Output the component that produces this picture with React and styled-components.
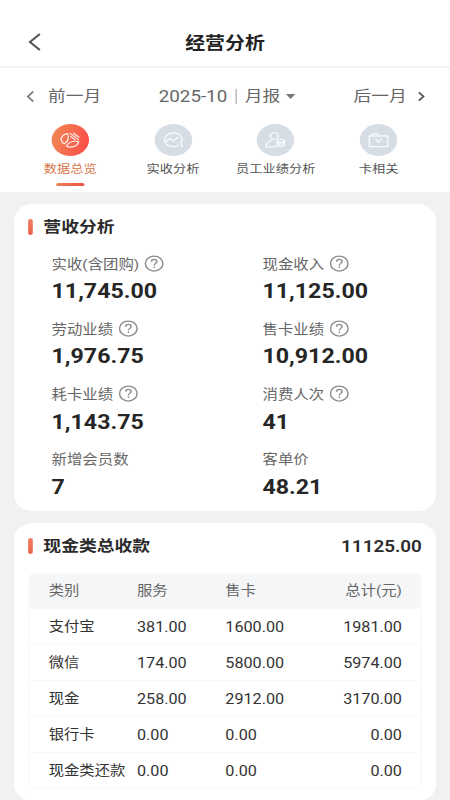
import React, { useState } from "react";
import styled, { createGlobalStyle } from "styled-components";

const months = { prev: "前一月", next: "后一月", current: "2025-10", type: "月报" };

const tabs = [
	{ id: "overview", label: "数据总览", Icon: PieIcon },
	{ id: "income", label: "实收分析", Icon: TrendIcon },
	{ id: "staff", label: "员工业绩分析", Icon: StaffIcon },
	{ id: "card", label: "卡相关", Icon: WalletIcon },
];

const stats = [
	{ label: "实收(含团购)", value: "11,745.00", help: true },
	{ label: "现金收入", value: "11,125.00", help: true },
	{ label: "劳动业绩", value: "1,976.75", help: true },
	{ label: "售卡业绩", value: "10,912.00", help: true },
	{ label: "耗卡业绩", value: "1,143.75", help: true },
	{ label: "消费人次", value: "41", help: true },
	{ label: "新增会员数", value: "7" },
	{ label: "客单价", value: "48.21" },
];

const rows = [
	["支付宝", "381.00", "1600.00", "1981.00"],
	["微信", "174.00", "5800.00", "5974.00"],
	["现金", "258.00", "2912.00", "3170.00"],
	["银行卡", "0.00", "0.00", "0.00"],
	["现金类还款", "0.00", "0.00", "0.00"],
];

export default function App() {
	const [active, setActive] = useState("overview");

	return (
		<>
			<GlobalStyle />
			<Page>
				<Header>
					<BackIcon />
					<Title>经营分析</Title>
				</Header>

				<TopPanel>
					<MonthBar>
						<MonthButton>
							<SmallChevron />
							<span>{months.prev}</span>
						</MonthButton>
						<MonthPicker>
							<MonthValue>{months.current}</MonthValue>
							<Divider />
							<span>{months.type}</span>
							<Caret />
						</MonthPicker>
						<MonthButton $next>
							<span>{months.next}</span>
							<SmallChevron right />
						</MonthButton>
					</MonthBar>

					<Tabs>
						{tabs.map(({ id, label, Icon }) => (
							<Tab key={id} onClick={() => setActive(id)}>
								<TabCircle $active={id === active}>
									<Icon />
								</TabCircle>
								<TabLabel $active={id === active}>{label}</TabLabel>
								{id === active ? <TabLine /> : null}
							</Tab>
						))}
					</Tabs>
				</TopPanel>

				<Card>
					<CardHead>
						<Bar />
						<CardTitle>营收分析</CardTitle>
					</CardHead>
					<Stats>
						{stats.map((s) => (
							<Stat key={s.label}>
								<StatLabel>
									{s.label}
									{s.help ? <HelpIcon /> : null}
								</StatLabel>
								<StatValue>{s.value}</StatValue>
							</Stat>
						))}
					</Stats>
				</Card>

				<Card>
					<CardHead>
						<Bar />
						<CardTitle>现金类总收款</CardTitle>
						<Total>11125.00</Total>
					</CardHead>
					<Table>
						<TableHead>
							<span>类别</span>
							<span>服务</span>
							<span>售卡</span>
							<span>总计(元)</span>
						</TableHead>
						{rows.map(([name, ...nums]) => (
							<TableRow key={name}>
								<span>{name}</span>
								{nums.map((n, i) => (
									<Num key={i}>{n}</Num>
								))}
							</TableRow>
						))}
					</Table>
				</Card>
			</Page>
		</>
	);
}

function BackIcon() {
	return (
		<svg width="11" height="18" viewBox="0 0 11 18" fill="none" stroke="#555" strokeWidth="1.8">
			<path d="M10 1 L1.5 9 L10 17" />
		</svg>
	);
}

function SmallChevron({ right }) {
	return (
		<svg width="7" height="11" viewBox="0 0 7 11" fill="none" stroke={right ? "#555" : "#777"} strokeWidth="1.6">
			<path d={right ? "M1.4 1.4 L5.4 5.5 L1.4 9.6" : "M6.4 .5 L1.8 5.5 L6.4 10.5"} />
		</svg>
	);
}

function HelpIcon() {
	return (
		<svg width="17" height="17" viewBox="0 0 17 17" fill="none" stroke="#8c8c8c" strokeWidth="1.25">
			<circle cx="8.5" cy="8.5" r="7.5" />
			<path d="M6.2 6.8 C6.2 3.4 10.9 3.6 10.9 6.6 C10.9 8.4 8.6 8.4 8.6 10.4" />
			<path d="M8.6 11.6 V13" />
		</svg>
	);
}

function PieIcon() {
	return (
		<svg width="18" height="18" viewBox="0 0 18 18" fill="none" stroke="#ffe9e2" strokeWidth="1.15" strokeLinejoin="round" strokeLinecap="round">
			<path d="M6.6 2.6 C3 3.2 .9 6 1.3 8.8 C1.6 11 2.8 12.3 4 12.8 C6.6 10.8 8.4 8 6.6 2.6 Z" />
			<path d="M5.6 15 C9 17.2 15 16 16.2 10.6 C12 9.6 8 11 5.6 15 Z" />
			<path d="M8.8 2.4 L15.8 8.6 M11.8 2.2 L16.4 6.2 M9.2 5.4 L13 8.8" />
		</svg>
	);
}

function TrendIcon() {
	return (
		<svg width="18" height="18" viewBox="0 0 18 18" fill="none" stroke="#f4f9fd" strokeWidth="1.3" strokeLinejoin="round" strokeLinecap="round">
			<path d="M13 14.6 C9.8 16.5 4.2 15.6 2.2 12 C-.2 6.5 3.4 2 9 2 C14.6 2 18 7 15.2 12.2 L16.4 15.4" />
			<path d="M2.4 10.4 L6 7.4 L8.8 9.8 L13 6.2" />
		</svg>
	);
}

function StaffIcon() {
	return (
		<svg width="18" height="18" viewBox="0 0 18 18" fill="none" stroke="#f4f9fd" strokeWidth="1.3" strokeLinejoin="round" strokeLinecap="round">
			<circle cx="8" cy="5" r="3.4" />
			<path d="M6 8.2 C6 10.4 1 10 1 15.8 H10" />
			<ellipse cx="13.6" cy="9.8" rx="3" ry="1.5" />
			<path d="M10.6 10 V14 C11 15.9 16.2 15.9 16.6 14 V10 M10.8 12.2 C12 13.3 15.2 13.3 16.4 12.2" />
		</svg>
	);
}

function WalletIcon() {
	return (
		<svg width="18" height="18" viewBox="0 0 18 18" fill="none" stroke="#f4f9fd" strokeWidth="1.3" strokeLinejoin="round" strokeLinecap="round">
			<path d="M1.2 5 H16.8 V15.6 H1.2 Z" />
			<path d="M1.6 4.8 L5.6 2.4 L8 2.8 L9.2 4.8" />
			<path d="M6.8 8.4 L9 11.2 L11.2 8.4" strokeWidth="1.5" />
		</svg>
	);
}

const GlobalStyle = createGlobalStyle`
	* {
		box-sizing: border-box;
	}
	body {
		margin: 0;
		background: #f1f1f1;
		overflow: hidden;
	}
`;

// 384pt wide design, widened to the 450px viewport
const Page = styled.div`
	width: 384px;
	height: 800px;
	overflow: hidden;
	transform: scaleX(1.171875);
	transform-origin: 0 0;
	background: #f1f1f1;
	color: #2b2b2b;
	font-family: Roboto, "Noto Sans CJK SC", sans-serif;
	font-size: 13px;
	& svg {
		flex: none;
		display: block;
	}
`;

const Header = styled.header`
	display: grid;
	grid-template-columns: 1fr auto 1fr;
	align-items: center;
	height: 68px;
	padding: 18px 24px 0;
	background: #fff;
	border-bottom: 2px solid #f4f4f4;
`;

const Title = styled.h1`
	margin: 0;
	padding-top: 1px;
	font-size: 17px;
	line-height: 24px;
	font-weight: 600;
	color: #222;
`;

const TopPanel = styled.section`
	height: 124px;
	background: #fff;
`;

const MonthBar = styled.div`
	display: grid;
	grid-template-columns: 113.5px 1fr auto;
	align-items: center;
	height: 56px;
	padding: 0 21px 0 22px;
	font-size: 15.1px;
	line-height: 20px;
	color: #666;
`;

const MonthButton = styled.div`
	display: flex;
	align-items: center;
	gap: ${(p) => (p.$next ? "9px" : "12px")};
`;

const MonthPicker = styled.div`
	display: flex;
	align-items: center;
`;

const MonthValue = styled.b`
	padding-top: 1px;
	font-size: 16px;
	font-weight: 400;
`;

const Divider = styled.i`
	width: 1px;
	height: 15px;
	margin: 0 7px;
	background: #aaa;
`;

const Caret = styled.i`
	margin-left: 5px;
	border: 4.5px solid transparent;
	border-top: 5px solid #777;
	border-bottom: 0;
`;

const Tabs = styled.nav`
	display: grid;
	grid-template-columns: repeat(4, 1fr);
	padding: 0 17px 0 16px;
`;

const Tab = styled.div`
	display: flex;
	flex-direction: column;
	align-items: center;
`;

const TabCircle = styled.div`
	display: flex;
	align-items: center;
	justify-content: center;
	width: 32px;
	height: 32px;
	border-radius: 50%;
	background: ${(p) => (p.$active ? "linear-gradient(100deg, #f08a55, #fb4a47)" : "#d6dde5")};
`;

const TabLabel = styled.span`
	margin-top: 5px;
	font-size: 11.3px;
	line-height: 17px;
	white-space: nowrap;
	color: ${(p) => (p.$active ? "#d5764a" : "#555")};
`;

const TabLine = styled.i`
	width: 24px;
	height: 3px;
	margin-top: 5px;
	border-radius: 2px;
	background: linear-gradient(90deg, #ea8258, #ee5148);
`;

const Card = styled.section`
	margin: 12px 12px 0;
	padding: 11px 12px 12px;
	border-radius: 16px;
	background: #fff;
`;

const CardHead = styled.div`
	display: flex;
	align-items: center;
	height: 24px;
`;

const Bar = styled.i`
	width: 4px;
	height: 16px;
	margin-right: 9px;
	border-radius: 2px;
	background: linear-gradient(#ee8062, #f0604f);
`;

const CardTitle = styled.h2`
	margin: 0;
	font-size: 15.2px;
	line-height: 24px;
	font-weight: 600;
	color: #2b2b2b;
`;

const Total = styled.strong`
	margin-left: auto;
	padding-top: 1px;
	font-size: 16.1px;
	font-weight: 600;
`;

const Stats = styled.div`
	display: grid;
	grid-template-columns: 180px 1fr;
	grid-auto-rows: 65.3px;
	height: 260px;
	padding: 15px 0 0 20px;
`;

const Stat = styled.div`
	display: flex;
	flex-direction: column;
`;

const StatLabel = styled.div`
	display: flex;
	align-items: center;
	gap: 4.5px;
	height: 18px;
	font-size: 13.15px;
	color: #666;
`;

const StatValue = styled.div`
	margin-top: 8px;
	font-size: 19.8px;
	line-height: 24px;
	font-weight: 700;
	color: #262626;
`;

const Table = styled.div`
	margin-top: 15px;
	border: 1px solid #f7f7f7;
	border-radius: 6px;
	overflow: hidden;
`;

const TableRow = styled.div`
	display: grid;
	grid-template-columns: 75.4px 75.4px 76px 1fr;
	align-items: center;
	height: 36px;
	padding: 0 16px 0 16.5px;
	font-size: 13.1px;
	line-height: 18px;
	color: #333;
	white-space: nowrap;
	& + & {
		border-top: 1px solid #f8f8f8;
	}
	& > :last-child {
		text-align: right;
	}
`;

const TableHead = styled(TableRow)`
	height: 34px;
	background: #f5f6f8;
	color: #666;
`;

const Num = styled.span`
	font-size: 13.8px;
`;
